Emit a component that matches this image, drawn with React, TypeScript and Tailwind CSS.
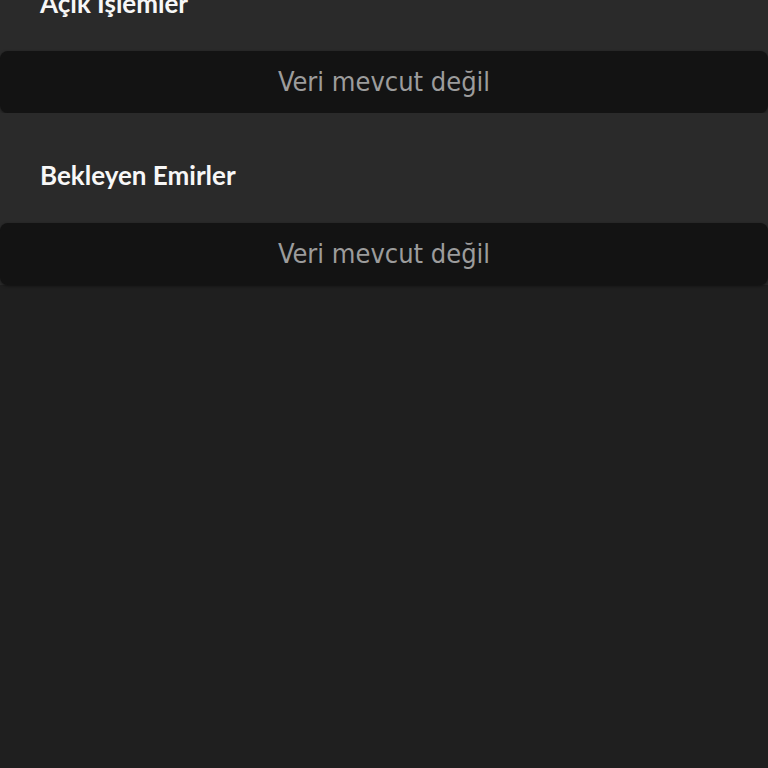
function Section({ title }: { title: string }) {
  return (
    <div className="bg-[#2a2a2a]">
      <div className="h-[110px] pt-[46px] pl-[40px]">
        <h2
          className="text-[26px] leading-[32px] font-bold text-[#f7f7f7]"
          style={{ fontFamily: "Lato, sans-serif" }}
        >
          {title}
        </h2>
      </div>
      <div className="h-[62px] w-full rounded-[8px] bg-[#131313] shadow-[0_1px_3px_rgba(0,0,0,0.5)] flex items-center justify-center">
        <span
          className="text-[27px] text-[#9c9c9c]"
          style={{ fontFamily: '"DejaVu Sans", sans-serif', fontStretch: "condensed" }}
        >
          Veri mevcut değil
        </span>
      </div>
    </div>
  );
}

export default function App() {
  return (
    <div className="min-h-screen bg-[#1f1f1f] overflow-hidden">
      <div className="-mt-[59px]">
        <Section title="Açık İşlemler" />
        <Section title="Bekleyen Emirler" />
      </div>
    </div>
  );
}
